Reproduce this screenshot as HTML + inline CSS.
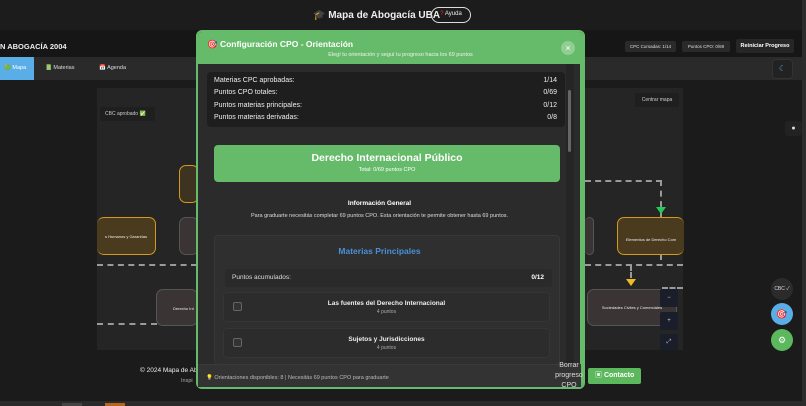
<!DOCTYPE html>
<html><head><meta charset="utf-8"><style>
*{box-sizing:border-box;margin:0;padding:0}
body{width:806px;height:406px;overflow:hidden;background:#1b1b1b;font-family:"Liberation Sans","Noto Sans CJK SC",sans-serif;color:#ddd;position:relative}
.a{position:absolute}
.node{position:absolute;border-radius:7px;font-size:4px;color:#eee;text-align:center}
.dash{position:absolute;border-top:2px dashed #9a9a9a}
.vdash{position:absolute;border-left:2px dashed #9a9a9a}
.row{display:flex;justify-content:space-between;font-size:7px;color:#eee;height:12.5px;align-items:center}
.item{position:absolute;left:223px;width:327px;height:30px;background:#2c2c2c;border:1px solid #353535;border-radius:4px}
.cb{position:absolute;left:9px;top:9px;width:9px;height:9px;border:1px solid #666;border-radius:2px;background:#333}
</style></head><body>
<div class="a" style="left:0;top:0;width:806px;height:30px;background:#1c1c1c"></div>
<div class="a" style="left:313px;top:10px;font-size:10px;font-weight:bold;color:#eee;white-space:nowrap">🎓 Mapa de Abogacía UBA</div>
<div class="a" style="left:431px;top:7px;width:40px;height:16px;border:1.5px solid #ddd;border-radius:8px;font-size:6px;color:#eee;text-align:center;line-height:13px"><span style="color:#e33">?</span> Ayuda</div>
<div class="a" style="left:0;top:30px;width:806px;height:27px;background:#161616"></div>
<div class="a" style="left:0;top:42px;font-size:7.5px;font-weight:bold;color:#eee">N ABOGACÍA 2004</div>
<div class="a" style="left:625px;top:41px;width:51px;height:11px;background:#2a2a2a;border-radius:2px;font-size:4.5px;color:#ddd;text-align:center;line-height:11px">CPC Cursadas: 1/14</div>
<div class="a" style="left:682px;top:41px;width:48px;height:11px;background:#2a2a2a;border-radius:2px;font-size:4.5px;color:#ddd;text-align:center;line-height:11px">Puntos CPO: 0/69</div>
<div class="a" style="left:736px;top:39px;width:58px;height:14px;background:#262626;border-radius:2px;font-size:5.5px;font-weight:bold;color:#fff;text-align:center;line-height:14px">Reiniciar Progreso</div>
<div class="a" style="left:0;top:57px;width:802px;height:23px;background:#2a2a2a"></div>
<div class="a" style="left:0;top:57px;width:34px;height:23px;background:#5aaee8;font-size:5.5px;color:#fff;line-height:23px;padding-left:4px">🟢 Mapa</div>
<div class="a" style="left:45px;top:57px;font-size:5.5px;color:#ddd;line-height:23px">📗 Materias</div>
<div class="a" style="left:99px;top:57px;font-size:5.5px;color:#ddd;line-height:23px">📅 Agenda</div>
<div class="a" style="left:772px;top:59px;width:21px;height:20px;background:#222;border:1px solid #333;border-radius:4px;color:#5aaee8;font-size:8px;text-align:center;line-height:18px">☾</div>
<div class="a" style="left:802px;top:0;width:4px;height:406px;background:#2c2c2c"></div>
<!-- map -->
<div class="a" style="left:97px;top:88px;width:586px;height:262px;background:#252525"></div>
<div class="a" style="left:100px;top:107px;width:55px;height:14px;background:#1f1f1f;border-radius:2px;font-size:5px;color:#ccc;line-height:14px;padding-left:5px">CBC aprobado <span style="color:#3c3">✅</span></div>
<div class="a" style="left:635px;top:93px;width:44px;height:14px;background:#1f1f1f;border-radius:2px;font-size:5px;color:#ccc;line-height:14px;text-align:center">Centrar mapa</div>
<div class="a" style="left:785px;top:121px;width:17px;height:15px;background:#222;border-radius:3px;color:#ddd;font-size:7px;text-align:center;line-height:15px">●</div>
<div class="node" style="left:179px;top:165px;width:20px;height:38px;border:1.5px solid #d39a1c;background:#3d3320"></div>
<div class="node" style="left:97px;top:217px;width:59px;height:38px;border:1.5px solid #d39a1c;border-left:none;background:#4a3b1e;padding-top:16px">s Humanos y Garantías</div>
<div class="node" style="left:179px;top:217px;width:20px;height:38px;border:1.5px solid #555;background:#3a3434"></div>
<div class="dash" style="left:97px;top:264px;width:100px"></div>
<div class="dash" style="left:97px;top:323px;width:60px"></div>
<div class="node" style="left:156px;top:289px;width:42px;height:37px;border:1.5px solid #555;background:#3a3434;padding-top:16px;text-align:left;padding-left:16px">Derecho Int</div>
<div class="vdash" style="left:660px;top:180px;height:80px"></div>
<div class="dash" style="left:585px;top:180px;width:77px"></div>
<div class="a" style="left:656px;top:207px;border-left:5px solid transparent;border-right:5px solid transparent;border-top:7px solid #2c5"></div>
<div class="node" style="left:617px;top:217px;width:67px;height:38px;border:1.5px solid #d39a1c;border-right:none;background:#4a3b1e;padding-top:19px">Elementos de Derecho Com</div>
<div class="node" style="left:585px;top:217px;width:9px;height:38px;border:1.5px solid #555;border-left:none;background:#3a3434"></div>
<div class="dash" style="left:585px;top:264px;width:98px"></div>
<div class="dash" style="left:662px;top:287px;width:21px"></div>
<div class="vdash" style="left:630px;top:265px;height:20px"></div>
<div class="a" style="left:626px;top:279px;border-left:5px solid transparent;border-right:5px solid transparent;border-top:7px solid #eb2"></div>
<div class="node" style="left:587px;top:289px;width:90px;height:37px;border:1.5px solid #555;background:#3a3434;padding-top:15px">Sociedades Civiles y Comerciales</div>
<div class="a" style="left:660px;top:289px;width:18px;height:18px;background:#1a1e2a;border-radius:2px;color:#ccc;font-size:6px;text-align:center;line-height:18px">−</div>
<div class="a" style="left:660px;top:312px;width:18px;height:18px;background:#1a1e2a;border-radius:2px;color:#ccc;font-size:6px;text-align:center;line-height:18px">+</div>
<div class="a" style="left:660px;top:334px;width:18px;height:16px;background:#1a1e2a;border-radius:2px;color:#ccc;font-size:6px;text-align:center;line-height:16px">⤢</div>
<div class="a" style="left:771px;top:278px;width:22px;height:22px;border-radius:50%;background:#2b2b2b;font-size:5px;color:#ddd;text-align:center;line-height:22px">CBC ✓</div>
<div class="a" style="left:771px;top:303px;width:22px;height:22px;border-radius:50%;background:#5aaee8;font-size:9px;text-align:center;line-height:22px">🎯</div>
<div class="a" style="left:771px;top:329px;width:22px;height:22px;border-radius:50%;background:#5cb85c;font-size:9px;color:#fff;text-align:center;line-height:22px">⚙</div>
<!-- footer -->
<div class="a" style="left:140px;top:367px;font-size:6.5px;color:#eee">© 2024 Mapa de Abo</div>
<div class="a" style="left:181px;top:378px;font-size:5.5px;color:#aaa">Inspi</div>
<div class="a" style="left:588px;top:368px;width:53px;height:16px;background:#5cb85c;border-radius:2px;font-size:7px;font-weight:bold;color:#fff;line-height:16px;padding-left:7px">▣ Contacto</div>
<div class="a" style="left:0;top:401px;width:802px;height:5px;background:#2a2a2a"></div>
<div class="a" style="left:62px;top:403px;width:20px;height:3px;background:#444"></div>
<div class="a" style="left:105px;top:403px;width:20px;height:3px;background:#b5651d"></div>
<!-- modal -->
<div class="a" style="left:196px;top:30px;width:389px;height:359px;background:#2b2b2b;border:2px solid #66bb6a;border-radius:6px;overflow:hidden">
 <div class="a" style="left:0;top:0;width:385px;height:32px;background:#66bb6a"></div>
 <div class="a" style="left:9px;top:7px;font-size:8.5px;font-weight:bold;color:#fff">🎯 Configuración CPO - Orientación</div>
 <div class="a" style="left:0;top:20px;width:385px;text-align:center;font-size:5.5px;color:#f0f0f0;padding-left:20px">Elegí tu orientación y seguí tu progreso hacia los 69 puntos</div>
 <div class="a" style="left:363px;top:9px;width:14px;height:14px;border-radius:50%;background:#8fcf91;color:#fff;font-size:9px;text-align:center;line-height:14px">×</div>
 <div class="a" style="left:382px;top:32px;width:3px;height:327px;background:#66bb6a"></div>
 <div class="a" style="left:368px;top:32px;width:8px;height:300px;background:#252525"></div>
 <div class="a" style="left:370px;top:58px;width:3px;height:62px;background:#666;border-radius:2px"></div>
 <div class="a" style="left:9px;top:40px;width:358px;height:55px;background:#1e1e1e;border-radius:4px;padding:2px 8px 0 7px">
  <div class="row"><span>Materias CPC aprobadas:</span><span>1/14</span></div>
  <div class="row"><span>Puntos CPO totales:</span><span>0/69</span></div>
  <div class="row"><span>Puntos materias principales:</span><span>0/12</span></div>
  <div class="row"><span>Puntos materias derivadas:</span><span>0/8</span></div>
 </div>
 <div class="a" style="left:16px;top:113px;width:346px;height:37px;background:#66bb6a;border-radius:4px;text-align:center;color:#fff">
  <div style="font-size:10.5px;font-weight:bold;margin-top:7px">Derecho Internacional Público</div>
  <div style="font-size:5.5px;margin-top:3px">Total: 0/69 puntos CPO</div>
 </div>
 <div class="a" style="left:0;top:168px;width:363px;text-align:center;font-size:6.5px;font-weight:bold;color:#fff">Información General</div>
 <div class="a" style="left:0;top:181px;width:363px;text-align:center;font-size:5.5px;color:#ddd">Para graduarte necesitás completar 69 puntos CPO. Esta orientación te permite obtener hasta 69 puntos.</div>
 <div class="a" style="left:16px;top:203px;width:346px;height:130px;background:#2f2f2f;border:1px solid #383838;border-radius:4px"></div>
 <div class="a" style="left:0;top:214px;width:363px;text-align:center;font-size:8.5px;font-weight:bold;color:#4a90d9">Materias Principales</div>
 <div class="a" style="left:27px;top:237px;width:327px;height:18px;background:#2a2a2a;border-radius:3px;font-size:6.5px;color:#ddd;line-height:18px;padding:0 8px 0 7px"><span>Puntos acumulados:</span><span style="float:right;font-weight:bold;color:#fff">0/12</span></div>
</div>
<div class="item" style="top:292px"><div class="cb"></div><div style="text-align:center;font-size:6.5px;font-weight:bold;color:#eee;margin-top:7px">Las fuentes del Derecho Internacional</div><div style="text-align:center;font-size:5px;color:#aaa;margin-top:2px">4 puntos</div></div>
<div class="item" style="top:328px"><div class="cb"></div><div style="text-align:center;font-size:6.5px;font-weight:bold;color:#eee;margin-top:7px">Sujetos y Jurisdicciones</div><div style="text-align:center;font-size:5px;color:#aaa;margin-top:2px">4 puntos</div></div>
<div class="a" style="left:198px;top:364px;width:383px;height:23px;background:#333;border-top:1px solid #3a3a3a;font-size:5.5px;color:#bbb;line-height:26px;padding-left:8px"><span style="color:#fd3">💡</span> Orientaciones disponibles: 8 | Necesitás 69 puntos CPO para graduarte</div>
<div class="a" style="left:553px;top:361px;font-size:7px;color:#ddd;text-align:center;line-height:10px;width:32px">Borrar progreso CPO</div>
</body></html>
